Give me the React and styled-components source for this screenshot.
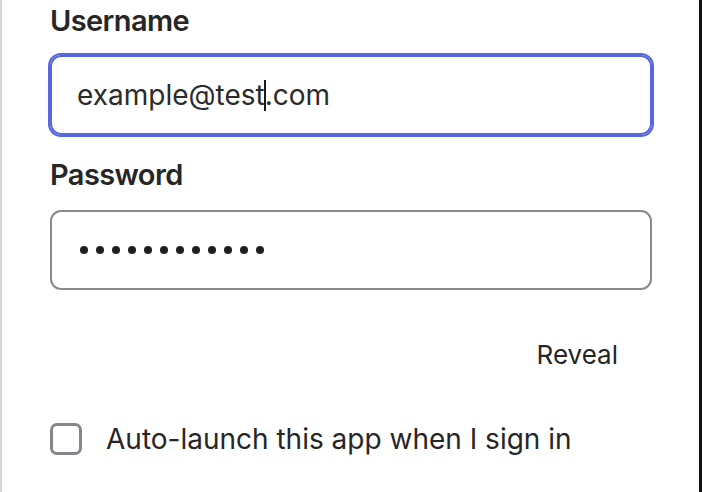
import React from "react";
import styled, { createGlobalStyle } from "styled-components";

const Global = createGlobalStyle`
  html, body { margin: 0; padding: 0; background: #ffffff; }
  body { font-family: Inter, "Noto Sans", sans-serif; color: #262626; }
  * { box-sizing: border-box; }
`;

const Frame = styled.div`
  width: 702px;
  height: 492px;
  border-left: 2px solid #d6d6d6;
  border-right: 3px solid #111111;
  background: #ffffff;
  overflow: hidden;
`;

const Form = styled.form`
  display: flex;
  flex-direction: column;
  width: 650px;
  padding: 3px 0 0 48px;
`;

const Label = styled.label`
  font-size: 29px;
  line-height: 36px;
  font-weight: 600;
  letter-spacing: -0.6px;
  color: #262626;
  margin-top: ${(p) => p.$top || 0}px;
`;

const Field = styled.div`
  display: flex;
  align-items: center;
  height: 80px;
  margin-top: ${(p) => p.$top || 0}px;
  padding: 0 25px;
  border: 2px solid ${(p) => (p.$focused ? "#5867dd" : "#8a8a8a")};
  box-shadow: ${(p) => (p.$focused ? "0 0 0 2px #5867dd" : "none")};
  border-radius: 11px;
  font-size: 28px;
  color: #2b2b2b;
  white-space: pre;
`;

const Caret = styled.span`
  display: inline-block;
  width: 2px;
  height: 31px;
  background: #1a1a1a;
  margin: 0 -1px;
  vertical-align: middle;
`;

const Dots = styled.span`
  display: flex;
  gap: 8px;
  padding-left: 3px;
`;

const Dot = styled.span`
  width: 8px;
  height: 8px;
  border-radius: 50%;
  background: #1e1e1e;
`;

const RevealRow = styled.div`
  display: flex;
  justify-content: flex-end;
  margin-top: 49px;
  padding-right: 34px;
`;

const RevealButton = styled.button`
  border: none;
  background: none;
  padding: 0;
  font-family: inherit;
  font-size: 26px;
  line-height: 32px;
  color: #262626;
  cursor: pointer;
`;

const CheckRow = styled.label`
  display: flex;
  align-items: center;
  gap: 24px;
  margin-top: 51px;
  font-size: 28px;
  line-height: 34px;
  color: #262626;
`;

const Box = styled.span`
  width: 32px;
  height: 32px;
  border: 3px solid #85858c;
  border-radius: 7px;
  flex: none;
`;

export default function App() {
  return (
    <>
      <Global />
      <Frame>
        <Form onSubmit={(e) => e.preventDefault()}>
          <Label>Username</Label>
          <Field $focused $top={16}>
            example@test<Caret />.com
          </Field>
          <Label $top={22}>Password</Label>
          <Field $top={17}>
            <Dots>
              {Array.from({ length: 12 }).map((_, i) => (
                <Dot key={i} />
              ))}
            </Dots>
          </Field>
          <RevealRow>
            <RevealButton type="button">Reveal</RevealButton>
          </RevealRow>
          <CheckRow>
            <Box />
            Auto-launch this app when I sign in
          </CheckRow>
        </Form>
      </Frame>
    </>
  );
}
